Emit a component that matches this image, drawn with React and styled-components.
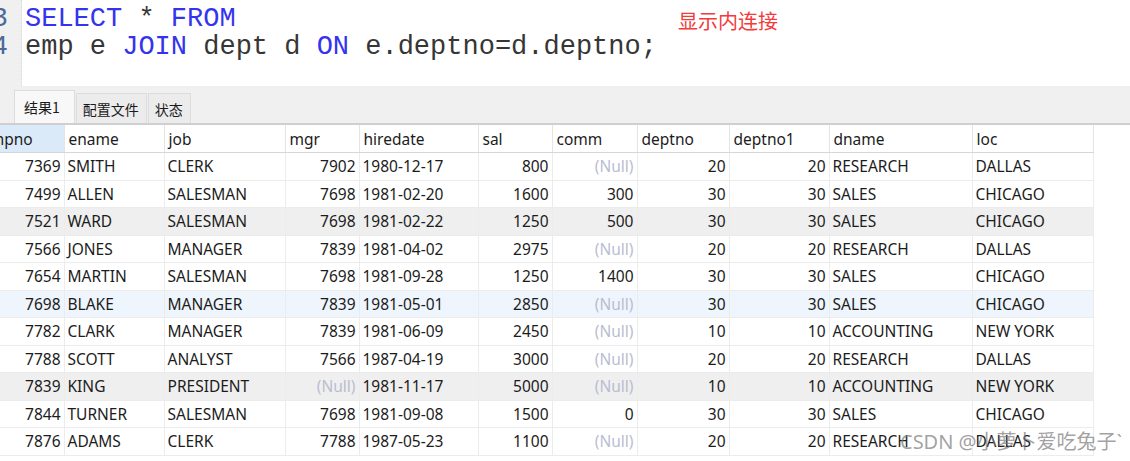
import React from 'react'
import styled, { createGlobalStyle } from 'styled-components'

const Global = createGlobalStyle`
  html, body {
    margin: 0;
    padding: 0;
    background: #ffffff;
    overflow: hidden;
  }
  body {
    font-family: "Noto Sans", "Noto Sans CJK SC", sans-serif;
  }
`

const Page = styled.div`
  position: relative;
  width: 1130px;
  height: 461px;
  overflow: hidden;
  background: #fff;
`

const Editor = styled.div`
  display: flex;
  height: 86px;
  background: #fff;
`

const Gutter = styled.div`
  width: 22px;
  flex: none;
  background: #f0f0f0;
  border-right: 1px dotted #d8d8d8;
  overflow: hidden;
  display: flex;
  flex-direction: column;
  align-items: flex-end;
  padding-top: 5px;
  box-sizing: border-box;
`

const LineNo = styled.div`
  font-family: "Liberation Mono", monospace;
  font-size: 27px;
  line-height: 28px;
  color: #4a6a9a;
  margin-right: 13px;
  white-space: nowrap;
`

const Code = styled.div`
  flex: 1;
  padding: 5px 0 0 3px;
  font-family: "Liberation Mono", monospace;
  font-size: 27px;
  line-height: 28px;
  color: #363636;
  position: relative;
`

const CodeLine = styled.div`
  white-space: pre;
`

const Kw = styled.span`
  color: #3434ee;
`

const Note = styled.div`
  position: absolute;
  left: 656px;
  top: 8px;
  font-family: "Noto Sans CJK SC", sans-serif;
  font-size: 20px;
  line-height: 26px;
  color: #f23c3c;
`

const TabBar = styled.div`
  display: flex;
  align-items: flex-end;
  height: 39px;
  padding-left: 14px;
  background: #f0f0f0;
  border-bottom: 2px solid #cfcfcf;
  box-sizing: border-box;
`

const Tab = styled.div`
  height: ${p => (p.$active ? 33 : 30)}px;
  box-sizing: border-box;
  padding: 0 ${p => (p.$active ? 14 : 7)}px 0 ${p => (p.$active ? 9 : 6)}px;
  display: flex;
  align-items: center;
  font-family: "Noto Sans CJK SC", sans-serif;
  font-size: 14px;
  color: #1a1a1a;
  background: ${p => (p.$active ? '#f8f8f8' : '#ececec')};
  border: 1px solid #dcdcdc;
  border-bottom: none;
  margin-right: 1px;
`

const Grid = styled.table`
  border-collapse: collapse;
  table-layout: fixed;
  margin-left: -23px;
  font-family: "Noto Sans", "Noto Sans CJK SC", sans-serif;
  font-size: 15.5px;
  color: #1c1c1c;
`

const Head = styled.th`
  height: 27px;
  padding: 0 4px;
  text-align: left;
  font-weight: 400;
  background: ${p => (p.$sorted ? '#dbeaf8' : '#fff')};
  border-right: 1px solid #e4e4e4;
  border-bottom: 1px solid #d6d6d6;
  white-space: nowrap;
  overflow: hidden;
`

const Row = styled.tr`
  background: ${p => p.$bg};
`

const Cell = styled.td`
  height: 26.5px;
  padding: 0 3px;
  text-align: ${p => (p.$num ? 'right' : 'left')};
  border-right: 1px solid #ececec;
  border-bottom: 1px solid #ececec;
  white-space: nowrap;
  overflow: hidden;
  line-height: 26px;
`

const Null = styled.span`
  color: #b9bdd0;
`

const Watermark = styled.div`
  position: absolute;
  left: 900px;
  bottom: 6px;
  font-family: "Noto Sans", "Noto Sans CJK SC", sans-serif;
  font-size: 20px;
  color: rgba(120, 120, 120, 0.7);
  white-space: nowrap;
`

const columns = [
  { name: 'empno', width: 87, num: true, sorted: true },
  { name: 'ename', width: 100 },
  { name: 'job', width: 121 },
  { name: 'mgr', width: 74, num: true },
  { name: 'hiredate', width: 119 },
  { name: 'sal', width: 74, num: true },
  { name: 'comm', width: 85, num: true },
  { name: 'deptno', width: 92, num: true },
  { name: 'deptno1', width: 100, num: true },
  { name: 'dname', width: 143 },
  { name: 'loc', width: 121 },
]

const N = null
const rows = [
  [7369, 'SMITH', 'CLERK', 7902, '1980-12-17', 800, N, 20, 20, 'RESEARCH', 'DALLAS'],
  [7499, 'ALLEN', 'SALESMAN', 7698, '1981-02-20', 1600, 300, 30, 30, 'SALES', 'CHICAGO'],
  [7521, 'WARD', 'SALESMAN', 7698, '1981-02-22', 1250, 500, 30, 30, 'SALES', 'CHICAGO'],
  [7566, 'JONES', 'MANAGER', 7839, '1981-04-02', 2975, N, 20, 20, 'RESEARCH', 'DALLAS'],
  [7654, 'MARTIN', 'SALESMAN', 7698, '1981-09-28', 1250, 1400, 30, 30, 'SALES', 'CHICAGO'],
  [7698, 'BLAKE', 'MANAGER', 7839, '1981-05-01', 2850, N, 30, 30, 'SALES', 'CHICAGO'],
  [7782, 'CLARK', 'MANAGER', 7839, '1981-06-09', 2450, N, 10, 10, 'ACCOUNTING', 'NEW YORK'],
  [7788, 'SCOTT', 'ANALYST', 7566, '1987-04-19', 3000, N, 20, 20, 'RESEARCH', 'DALLAS'],
  [7839, 'KING', 'PRESIDENT', N, '1981-11-17', 5000, N, 10, 10, 'ACCOUNTING', 'NEW YORK'],
  [7844, 'TURNER', 'SALESMAN', 7698, '1981-09-08', 1500, 0, 30, 30, 'SALES', 'CHICAGO'],
  [7876, 'ADAMS', 'CLERK', 7788, '1987-05-23', 1100, N, 20, 20, 'RESEARCH', 'DALLAS'],
]

const rowBg = i => (i === 2 || i === 8 ? '#efefef' : i === 5 ? '#eef5fd' : '#fff')

export default function App() {
  return (
    <Page>
      <Global />
      <Editor>
        <Gutter>
          <LineNo>3</LineNo>
          <LineNo>4</LineNo>
        </Gutter>
        <Code>
          <CodeLine>
            <Kw>SELECT</Kw> * <Kw>FROM</Kw>
          </CodeLine>
          <CodeLine>
            emp e <Kw>JOIN</Kw> dept d <Kw>ON</Kw> e.deptno=d.deptno;
          </CodeLine>
          <Note>显示内连接</Note>
        </Code>
      </Editor>
      <TabBar>
        <Tab $active>结果1</Tab>
        <Tab>配置文件</Tab>
        <Tab>状态</Tab>
      </TabBar>
      <Grid>
        <colgroup>
          {columns.map(c => (
            <col key={c.name} style={{ width: c.width }} />
          ))}
        </colgroup>
        <thead>
          <tr>
            {columns.map(c => (
              <Head key={c.name} $sorted={c.sorted}>
                {c.name}
              </Head>
            ))}
          </tr>
        </thead>
        <tbody>
          {rows.map((r, i) => (
            <Row key={i} $bg={rowBg(i)}>
              {r.map((v, j) => (
                <Cell key={j} $num={columns[j].num || v === null}>
                  {v === null ? <Null>(Null)</Null> : v}
                </Cell>
              ))}
            </Row>
          ))}
        </tbody>
      </Grid>
      <Watermark>CSDN @小萝卜爱吃兔子`</Watermark>
    </Page>
  )
}
